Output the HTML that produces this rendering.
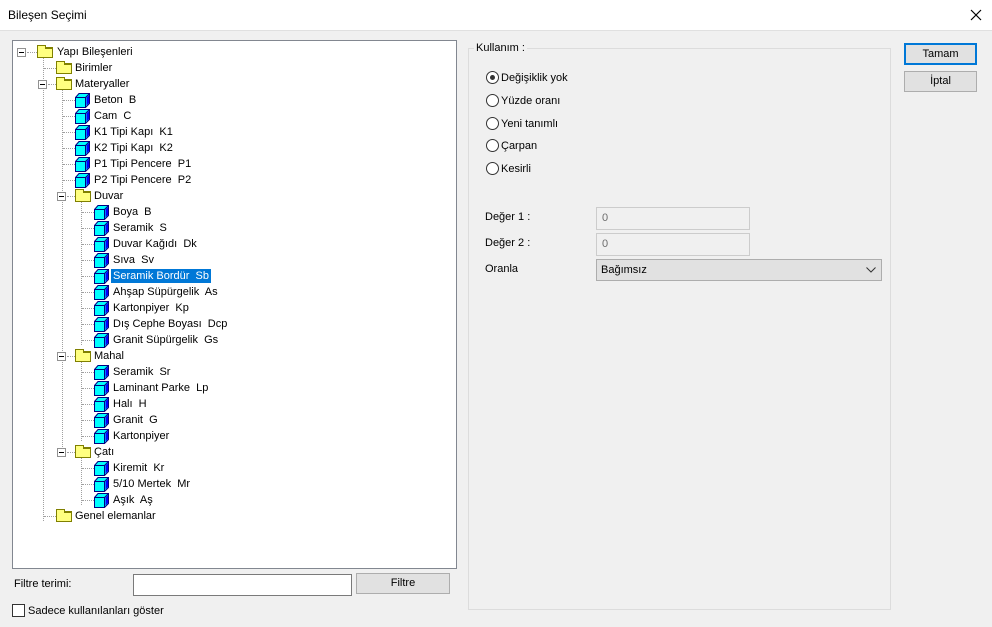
<!DOCTYPE html>
<html><head><meta charset="utf-8"><style>
*{margin:0;padding:0;box-sizing:border-box}
body{width:992px;height:627px;background:#f0f0f0;font-family:"Liberation Sans",sans-serif;font-size:11px;color:#000;position:relative;overflow:hidden}
.a{position:absolute}
#title{left:0;top:0;width:992px;height:31px;background:#fff;border-bottom:1px solid #e0e0e0;font-size:12px}
#tree{left:12px;top:40px;width:445px;height:529px;background:#fff;border:1px solid #828790}
.r{position:absolute;height:16px;line-height:16px;white-space:nowrap}
.t{position:absolute;top:1px;padding:0 2px;height:14px;line-height:14px}
.f{position:absolute;top:3px;width:16px;height:11px;background:#ffff80;border:1px solid #808000;border-top-width:2px}
.f:before{content:"";position:absolute;left:-1px;top:-4px;width:7px;height:3px;border:1px solid #808000;border-bottom:none;background:#ffff80}
.c{position:absolute;top:1px;width:15px;height:15px}
.b{position:absolute;width:9px;height:9px;border:1px solid #919191;background:#fff}
.b:after{content:"";position:absolute;left:1px;top:3px;width:5px;height:1px;background:#000}
.v{position:absolute;border-left:1px dotted #a0a0a0;width:0}
.h{position:absolute;border-top:1px dotted #a0a0a0;height:0}
.btn{position:absolute;background:#e1e1e1;border:1px solid #adadad;text-align:center;line-height:19px}
.radio{position:absolute;width:13px;height:13px;border:1px solid #333;border-radius:50%;background:#fff}
.inp{position:absolute;border:1px solid #ccc;background:#f0f0f0;color:#6d6d6d;padding-left:5px;line-height:20px}
</style></head><body>
<div class="a" id="title"><span class="a" style="left:8px;top:8px">Bileşen Seçimi</span>
<svg class="a" style="left:970px;top:9px" width="12" height="12"><path d="M1 1L11 11M11 1L1 11" stroke="#000" stroke-width="1.2"/></svg></div>

<div class="a" id="tree"></div>
<div class="a" style="left:12px;top:40px;width:445px;height:529px">
<div class="v" style="left:31px;top:17px;height:464px"></div>
<div class="v" style="left:50px;top:49px;height:368px"></div>
<div class="v" style="left:69px;top:161px;height:144px"></div>
<div class="v" style="left:69px;top:321px;height:80px"></div>
<div class="v" style="left:69px;top:417px;height:48px"></div>
</div>

<div id="rows" class="a" style="left:0;top:0">
<svg width="0" height="0" style="position:absolute"><defs><g id="cube"><path d="M4 0.5H14.5V10.5L10.5 14.5H0.5V4.5Z" fill="#00ffff" stroke="#000080"/><path d="M0.5 4.5H10.5V14.5M10.5 4.5L14.5 0.5" fill="none" stroke="#000080"/><path d="M11.5 4.5V12.5L14 10V2Z" fill="#0000ff"/></g></defs></svg>

<div class="b" style="left:17px;top:48px"></div><div class="h" style="left:27px;top:52px;width:10px"></div>
<div class="r" style="top:44px;left:0"><span class="f" style="left:37px"></span><span class="t" style="left:55px">Yapı Bileşenleri</span></div>

<div class="h" style="left:44px;top:68px;width:12px"></div>
<div class="r" style="top:60px"><span class="f" style="left:56px"></span><span class="t" style="left:73px">Birimler</span></div>
<div class="b" style="left:38px;top:80px"></div><div class="h" style="left:48px;top:84px;width:8px"></div>
<div class="r" style="top:76px"><span class="f" style="left:56px"></span><span class="t" style="left:73px">Materyaller</span></div>

<div class="h" style="left:63px;top:100px;width:12px"></div><div class="r" style="top:92px"><svg class="c" style="left:75px"><use href="#cube"/></svg><span class="t" style="left:92px">Beton&nbsp; B</span></div>
<div class="h" style="left:63px;top:116px;width:12px"></div><div class="r" style="top:108px"><svg class="c" style="left:75px"><use href="#cube"/></svg><span class="t" style="left:92px">Cam&nbsp; C</span></div>
<div class="h" style="left:63px;top:132px;width:12px"></div><div class="r" style="top:124px"><svg class="c" style="left:75px"><use href="#cube"/></svg><span class="t" style="left:92px">K1 Tipi Kapı&nbsp; K1</span></div>
<div class="h" style="left:63px;top:148px;width:12px"></div><div class="r" style="top:140px"><svg class="c" style="left:75px"><use href="#cube"/></svg><span class="t" style="left:92px">K2 Tipi Kapı&nbsp; K2</span></div>
<div class="h" style="left:63px;top:164px;width:12px"></div><div class="r" style="top:156px"><svg class="c" style="left:75px"><use href="#cube"/></svg><span class="t" style="left:92px">P1 Tipi Pencere&nbsp; P1</span></div>
<div class="h" style="left:63px;top:180px;width:12px"></div><div class="r" style="top:172px"><svg class="c" style="left:75px"><use href="#cube"/></svg><span class="t" style="left:92px">P2 Tipi Pencere&nbsp; P2</span></div>

<div class="b" style="left:57px;top:192px"></div><div class="h" style="left:67px;top:196px;width:8px"></div>
<div class="r" style="top:188px"><span class="f" style="left:75px"></span><span class="t" style="left:92px">Duvar</span></div>
<div class="h" style="left:82px;top:212px;width:12px"></div><div class="r" style="top:204px"><svg class="c" style="left:94px"><use href="#cube"/></svg><span class="t" style="left:111px">Boya&nbsp; B</span></div>
<div class="h" style="left:82px;top:228px;width:12px"></div><div class="r" style="top:220px"><svg class="c" style="left:94px"><use href="#cube"/></svg><span class="t" style="left:111px">Seramik&nbsp; S</span></div>
<div class="h" style="left:82px;top:244px;width:12px"></div><div class="r" style="top:236px"><svg class="c" style="left:94px"><use href="#cube"/></svg><span class="t" style="left:111px">Duvar Kağıdı&nbsp; Dk</span></div>
<div class="h" style="left:82px;top:260px;width:12px"></div><div class="r" style="top:252px"><svg class="c" style="left:94px"><use href="#cube"/></svg><span class="t" style="left:111px">Sıva&nbsp; Sv</span></div>
<div class="h" style="left:82px;top:276px;width:12px"></div><div class="r" style="top:268px"><svg class="c" style="left:94px"><use href="#cube"/></svg><span class="t" style="left:111px;background:#0078d7;color:#fff">Seramik Bordür&nbsp; Sb</span></div>
<div class="h" style="left:82px;top:292px;width:12px"></div><div class="r" style="top:284px"><svg class="c" style="left:94px"><use href="#cube"/></svg><span class="t" style="left:111px">Ahşap Süpürgelik&nbsp; As</span></div>
<div class="h" style="left:82px;top:308px;width:12px"></div><div class="r" style="top:300px"><svg class="c" style="left:94px"><use href="#cube"/></svg><span class="t" style="left:111px">Kartonpiyer&nbsp; Kp</span></div>
<div class="h" style="left:82px;top:324px;width:12px"></div><div class="r" style="top:316px"><svg class="c" style="left:94px"><use href="#cube"/></svg><span class="t" style="left:111px">Dış Cephe Boyası&nbsp; Dcp</span></div>
<div class="h" style="left:82px;top:340px;width:12px"></div><div class="r" style="top:332px"><svg class="c" style="left:94px"><use href="#cube"/></svg><span class="t" style="left:111px">Granit Süpürgelik&nbsp; Gs</span></div>

<div class="b" style="left:57px;top:352px"></div><div class="h" style="left:67px;top:356px;width:8px"></div>
<div class="r" style="top:348px"><span class="f" style="left:75px"></span><span class="t" style="left:92px">Mahal</span></div>
<div class="h" style="left:82px;top:372px;width:12px"></div><div class="r" style="top:364px"><svg class="c" style="left:94px"><use href="#cube"/></svg><span class="t" style="left:111px">Seramik&nbsp; Sr</span></div>
<div class="h" style="left:82px;top:388px;width:12px"></div><div class="r" style="top:380px"><svg class="c" style="left:94px"><use href="#cube"/></svg><span class="t" style="left:111px">Laminant Parke&nbsp; Lp</span></div>
<div class="h" style="left:82px;top:404px;width:12px"></div><div class="r" style="top:396px"><svg class="c" style="left:94px"><use href="#cube"/></svg><span class="t" style="left:111px">Halı&nbsp; H</span></div>
<div class="h" style="left:82px;top:420px;width:12px"></div><div class="r" style="top:412px"><svg class="c" style="left:94px"><use href="#cube"/></svg><span class="t" style="left:111px">Granit&nbsp; G</span></div>
<div class="h" style="left:82px;top:436px;width:12px"></div><div class="r" style="top:428px"><svg class="c" style="left:94px"><use href="#cube"/></svg><span class="t" style="left:111px">Kartonpiyer</span></div>

<div class="b" style="left:57px;top:448px"></div><div class="h" style="left:67px;top:452px;width:8px"></div>
<div class="r" style="top:444px"><span class="f" style="left:75px"></span><span class="t" style="left:92px">Çatı</span></div>
<div class="h" style="left:82px;top:468px;width:12px"></div><div class="r" style="top:460px"><svg class="c" style="left:94px"><use href="#cube"/></svg><span class="t" style="left:111px">Kiremit&nbsp; Kr</span></div>
<div class="h" style="left:82px;top:484px;width:12px"></div><div class="r" style="top:476px"><svg class="c" style="left:94px"><use href="#cube"/></svg><span class="t" style="left:111px">5/10 Mertek&nbsp; Mr</span></div>
<div class="h" style="left:82px;top:500px;width:12px"></div><div class="r" style="top:492px"><svg class="c" style="left:94px"><use href="#cube"/></svg><span class="t" style="left:111px">Aşık&nbsp; Aş</span></div>

<div class="h" style="left:44px;top:516px;width:12px"></div>
<div class="r" style="top:508px"><span class="f" style="left:56px"></span><span class="t" style="left:73px">Genel elemanlar</span></div>
</div>

<span class="a" style="left:14px;top:578px">Filtre terimi:</span>
<div class="a" style="left:133px;top:574px;width:219px;height:22px;background:#fff;border:1px solid #7a7a7a"></div>
<div class="btn" style="left:356px;top:573px;width:94px;height:21px">Filtre</div>
<div class="a" style="left:12px;top:604px;width:13px;height:13px;border:1px solid #333;background:#fff"></div>
<span class="a" style="left:28px;top:605px">Sadece kullanılanları göster</span>

<div class="a" style="left:468px;top:48px;width:423px;height:562px;border:1px solid #dcdcdc"></div>
<span class="a" style="left:474px;top:42px;background:#f0f0f0;padding:0 2px">Kullanım :</span>
<div class="radio" style="left:486px;top:71px"><div class="a" style="left:3px;top:3px;width:5px;height:5px;border-radius:50%;background:#333"></div></div>
<span class="a" style="left:501px;top:72px">Değişiklik yok</span>
<div class="radio" style="left:486px;top:94px"></div><span class="a" style="left:501px;top:95px">Yüzde oranı</span>
<div class="radio" style="left:486px;top:117px"></div><span class="a" style="left:501px;top:118px">Yeni tanımlı</span>
<div class="radio" style="left:486px;top:139px"></div><span class="a" style="left:501px;top:140px">Çarpan</span>
<div class="radio" style="left:486px;top:162px"></div><span class="a" style="left:501px;top:163px">Kesirli</span>

<span class="a" style="left:485px;top:211px">Değer 1 :</span>
<div class="inp" style="left:596px;top:207px;width:154px;height:23px">0</div>
<span class="a" style="left:485px;top:237px">Değer 2 :</span>
<div class="inp" style="left:596px;top:233px;width:154px;height:23px">0</div>
<span class="a" style="left:485px;top:263px">Oranla</span>
<div class="a" style="left:596px;top:259px;width:286px;height:22px;background:#e1e1e1;border:1px solid #adadad;padding-left:4px;line-height:20px">Bağımsız
<svg class="a" style="left:269px;top:7px" width="10" height="6"><path d="M0.5 0.5L5 5L9.5 0.5" fill="none" stroke="#333"/></svg></div>

<div class="btn" style="left:904px;top:43px;width:73px;height:22px;border:2px solid #0078d7;line-height:18px">Tamam</div>
<div class="btn" style="left:904px;top:71px;width:73px;height:21px">İptal</div>
</body></html>
